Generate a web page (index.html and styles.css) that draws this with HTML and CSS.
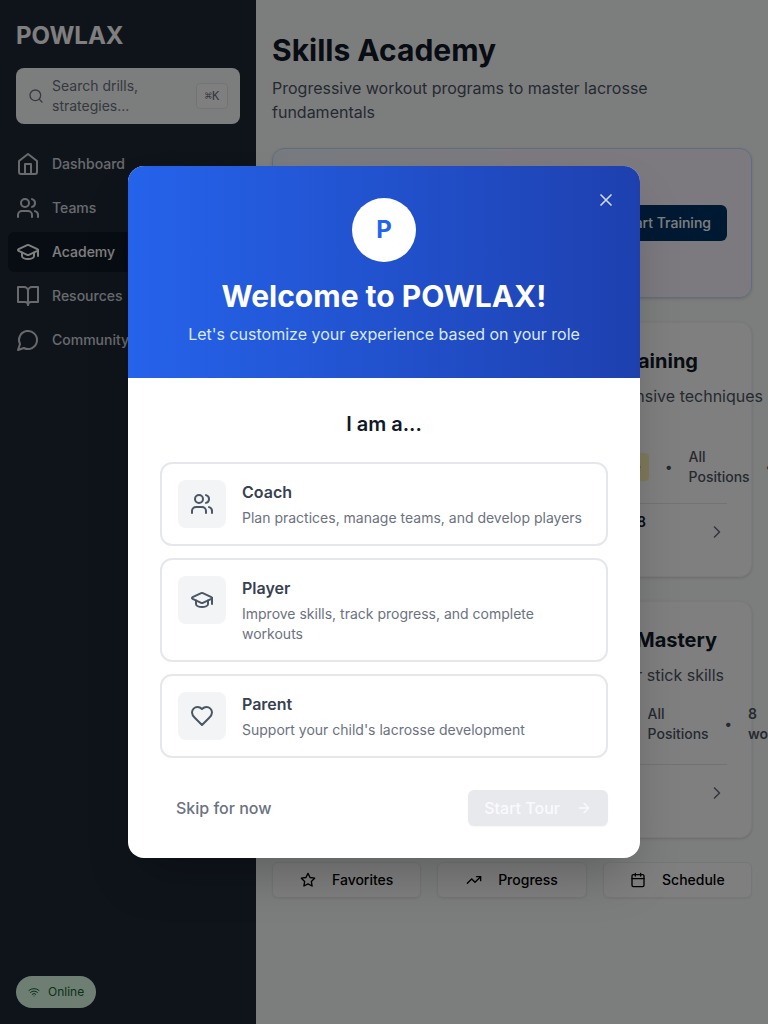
FILE: index.html
```html
<!DOCTYPE html>
<html lang="en">
<head>
<meta charset="utf-8">
<title>POWLAX – Skills Academy</title>
<link rel="stylesheet" href="styles.css">
</head>
<body>
<svg class="sprite" aria-hidden="true">
  <symbol id="users" viewBox="0 0 24 24"><path d="M16 21v-2a4 4 0 0 0-4-4H6a4 4 0 0 0-4 4v2"/><circle cx="9" cy="7" r="4"/><path d="M22 21v-2a4 4 0 0 0-3-3.87M16 3.13a4 4 0 0 1 0 7.75"/></symbol>
  <symbol id="cap" viewBox="0 0 24 24"><path d="M21.42 10.922a1 1 0 0 0-.019-1.838L12.83 5.18a2 2 0 0 0-1.66 0L2.6 9.08a1 1 0 0 0 0 1.832l8.57 3.908a2 2 0 0 0 1.66 0z"/><path d="M22 10v6"/><path d="M6 12.5V16a6 3 0 0 0 12 0v-3.5"/></symbol>
  <symbol id="chevron" viewBox="0 0 24 24"><path d="m9 18 6-6-6-6"/></symbol>
</svg>
<div class="app">
  <aside class="sidebar">
    <div class="brand">POWLAX</div>
    <div class="search">
      <svg class="icon s16" viewBox="0 0 24 24"><circle cx="11" cy="11" r="8"/><path d="m21 21-4.3-4.3"/></svg>
      <span class="search-text">Search drills, strategies...</span>
      <kbd>⌘K</kbd>
    </div>
    <nav class="nav">
      <a class="nav-item"><svg class="icon s24" viewBox="0 0 24 24"><path d="m3 9 9-7 9 7v11a2 2 0 0 1-2 2H5a2 2 0 0 1-2-2z"/><path d="M9 22V12h6v10"/></svg>Dashboard</a>
      <a class="nav-item"><svg class="icon s24"><use href="#users"/></svg>Teams</a>
      <a class="nav-item active"><svg class="icon s24"><use href="#cap"/></svg>Academy</a>
      <a class="nav-item"><svg class="icon s24" viewBox="0 0 24 24"><path d="M2 3h6a4 4 0 0 1 4 4v14a3 3 0 0 0-3-3H2z"/><path d="M22 3h-6a4 4 0 0 0-4 4v14a3 3 0 0 1 3-3h7z"/></svg>Resources</a>
      <a class="nav-item"><svg class="icon s24" viewBox="0 0 24 24"><path d="M7.9 20A9 9 0 1 0 4 16.1L2 22Z"/></svg>Community</a>
    </nav>
    <div class="online"><svg class="icon s12" viewBox="0 0 24 24"><path d="M12 20h.01M2 8.82a15 15 0 0 1 20 0M5 12.859a10 10 0 0 1 14 0M8.5 16.429a5 5 0 0 1 7 0"/></svg>Online</div>
  </aside>
  <main class="main">
    <h1>Skills Academy</h1>
    <p class="lead">Progressive workout programs to master lacrosse fundamentals</p>
    <section class="card hero"><button class="train">Start Training</button></section>
    <section class="card track attack">
      <h2>Attack Training</h2>
      <p class="desc">Offensive techniques</p>
      <div class="meta"><span class="badge">Intermediate</span><span>•</span><span class="positions">All Positions</span><span>•</span></div>
      <div class="foot"><span class="count">8</span><svg class="icon s20"><use href="#chevron"/></svg></div>
    </section>
    <section class="card track wall">
      <h2>Wall Ball Mastery</h2>
      <p class="desc">Master your stick skills</p>
      <div class="meta"><span class="positions">All Positions</span><span>•</span><span class="workouts">8 workouts</span></div>
      <div class="foot"><svg class="icon s20"><use href="#chevron"/></svg></div>
    </section>
    <div class="actions">
      <button><svg class="icon s16" viewBox="0 0 24 24"><path d="M12 2l3.09 6.26L22 9.27l-5 4.87 1.18 6.88L12 17.77l-6.18 3.25L7 14.14 2 9.27l6.91-1.01z"/></svg>Favorites</button>
      <button><svg class="icon s16" viewBox="0 0 24 24"><path d="m22 7-8.5 8.5-5-5L2 17"/><path d="M16 7h6v6"/></svg>Progress</button>
      <button><svg class="icon s16" viewBox="0 0 24 24"><path d="M8 2v4M16 2v4M3 10h18"/><rect x="3" y="4" width="18" height="18" rx="2"/></svg>Schedule</button>
    </div>
  </main>
</div>
<div class="overlay">
  <div class="modal" role="dialog">
    <header class="modal-head">
      <svg class="icon close" viewBox="0 0 24 24"><path d="M18 6 6 18M6 6l12 12"/></svg>
      <div class="logo">P</div>
      <h2>Welcome to POWLAX!</h2>
      <p>Let's customize your experience based on your role</p>
    </header>
    <div class="modal-body">
      <h3>I am a...</h3>
      <div class="roles">
        <div class="role"><span class="tile"><svg class="icon s24"><use href="#users"/></svg></span><div><h4>Coach</h4><p>Plan practices, manage teams, and develop players</p></div></div>
        <div class="role"><span class="tile"><svg class="icon s24"><use href="#cap"/></svg></span><div><h4>Player</h4><p>Improve skills, track progress, and complete workouts</p></div></div>
        <div class="role"><span class="tile"><svg class="icon s24" viewBox="0 0 24 24"><path d="M19 14c1.49-1.46 3-3.21 3-5.5A5.5 5.5 0 0 0 16.5 3c-1.76 0-3 .5-4.5 2-1.5-1.5-2.74-2-4.5-2A5.5 5.5 0 0 0 2 8.5c0 2.3 1.5 4.05 3 5.5l7 7Z"/></svg></span><div><h4>Parent</h4><p>Support your child's lacrosse development</p></div></div>
      </div>
      <footer class="modal-foot">
        <span class="skip">Skip for now</span>
        <button class="tour">Start Tour<svg class="icon s16" viewBox="0 0 24 24"><path d="M5 12h14M12 5l7 7-7 7"/></svg></button>
      </footer>
    </div>
  </div>
</div>
</body>
</html>
```

FILE: styles.css
```css
* { box-sizing: border-box; margin: 0; }
body { position: relative; height: 1024px; overflow: hidden; font: 16px/24px Inter, "Liberation Sans", sans-serif; color: #111827; }
button { font: inherit; border: 0; }
.sprite { display: none; }
.icon { flex: none; fill: none; stroke: currentColor; stroke-width: 2; stroke-linecap: round; stroke-linejoin: round; }
.s12 { width: 12px; height: 12px; }
.s16 { width: 16px; height: 16px; }
.s20 { width: 20px; height: 20px; }
.s24 { width: 24px; height: 24px; }

.app { display: flex; height: 1024px; }
.sidebar { flex: 0 0 256px; display: flex; flex-direction: column; background: #1f2937; }
.brand { padding: 20px 16px 16px; font-size: 24px; line-height: 32px; font-weight: 700; color: #fff; }
.search { display: flex; align-items: center; gap: 8px; height: 56px; margin: 0 16px 20px; padding: 0 12px; border-radius: 8px; background: #f9fafb; color: #6b7280; font-size: 14px; line-height: 20px; }
.search-text { flex: 1; }
kbd { width: 32px; height: 26px; border: 1px solid #e5e7eb; border-radius: 4px; background: #fff; font: 12px/24px "DejaVu Sans Mono", monospace; text-align: center; }
.nav { display: flex; flex-direction: column; gap: 4px; padding: 0 8px; }
.nav-item { display: flex; align-items: center; gap: 12px; height: 40px; padding: 0 8px; border-radius: 6px; font-size: 14px; font-weight: 500; color: #d1d5db; }
.nav-item.active { background: #111827; color: #fff; }
.online { display: flex; align-items: center; gap: 8px; width: 80px; height: 32px; margin: auto 0 16px 16px; padding: 0 12px; border-radius: 16px; background: #dcfce7; color: #166534; font-size: 12px; }

.main { flex: 1; min-width: 0; padding: 32px 16px; overflow: hidden; background: #f9fafb; }
h1 { font-size: 30px; line-height: 36px; font-weight: 700; }
.lead { margin: 8px 0 24px; color: #4b5563; }
.card { width: 480px; margin-bottom: 24px; padding: 24px; border: 1px solid #f3f4f6; border-radius: 12px; background: #fff; box-shadow: 0 1px 3px rgba(0,0,0,.14); }
.hero { display: flex; align-items: center; justify-content: flex-end; height: 150px; border-color: #bfdbfe; background: linear-gradient(90deg, #eff6ff, #faf5ff 60%); }
.train { height: 36px; padding: 0 16px; border-radius: 6px; background: #003366; color: #fff; font-size: 14px; font-weight: 500; }
.track h2 { font-size: 20px; line-height: 28px; font-weight: 700; text-align: right; }
.desc { margin-top: 9px; color: #4b5563; text-align: right; white-space: nowrap; }
.meta { display: flex; align-items: center; gap: 16px; color: #4b5563; font-size: 14px; line-height: 20px; font-weight: 500; }
.badge { padding: 4px 8px; border-radius: 4px; background: #fef3b4; color: #b45309; }
.positions { width: 61px; }
.foot { display: flex; justify-content: flex-end; border-top: 1px solid #e5e7eb; color: #6b7280; }
.attack { height: 255px; }
.attack h2 { padding-right: 29px; }
.attack .desc { margin-right: -36px; }
.attack .meta { justify-content: flex-end; margin: 39px -46px 16px 0; }
.attack .foot { padding-top: 8px; }
.attack .foot .icon { margin-top: 10px; }
.count { margin-right: 61px; color: #111827; font-size: 14px; line-height: 20px; font-weight: 600; }
.wall { height: 237px; }
.wall h2 { padding-right: 10px; }
.wall .desc { padding-right: 3px; }
.wall .meta { justify-content: flex-end; margin: 17px -85px 20px 0; }
.workouts { width: 64px; font-weight: 600; }
.wall .foot { padding-top: 18px; }
.actions { display: grid; grid-template-columns: repeat(3, 1fr); gap: 16px; }
.actions button { display: flex; align-items: center; justify-content: center; gap: 16px; height: 36px; border: 1px solid #e9edf2; border-radius: 6px; background: #fff; color: #000; font-size: 14px; font-weight: 500; padding: 0; box-shadow: 0 1px 2px rgba(0,0,0,.06); }

.overlay { position: absolute; inset: 0; display: flex; align-items: center; justify-content: center; background: rgba(0,0,0,.5); }
.modal { width: 512px; overflow: hidden; border-radius: 16px; background: #fff; box-shadow: 0 25px 50px -12px rgba(0,0,0,.25); }
.modal-head { position: relative; display: flex; flex-direction: column; align-items: center; padding: 32px; background: linear-gradient(90deg, #2563eb, #1e40af); color: #fff; }
.close { position: absolute; top: 24px; right: 24px; width: 20px; height: 20px; opacity: .8; }
.logo { width: 64px; height: 64px; margin-bottom: 16px; border-radius: 50%; background: #fff; color: #2563eb; font-size: 24px; line-height: 64px; font-weight: 700; text-align: center; }
.modal-head h2 { margin-bottom: 8px; font-size: 30px; line-height: 36px; font-weight: 700; }
.modal-head p { color: #dbeafe; }
.modal-body { padding: 32px; }
.modal-body h3 { margin-bottom: 24px; font-size: 20px; line-height: 28px; font-weight: 600; text-align: center; }
.roles { display: flex; flex-direction: column; gap: 12px; }
.role { display: flex; gap: 16px; padding: 16px; border: 2px solid #e5e7eb; border-radius: 12px; }
.tile { flex: none; display: flex; align-items: center; justify-content: center; width: 48px; height: 48px; border-radius: 8px; background: #f3f4f6; color: #4b5563; }
.role h4 { font-size: 16px; line-height: 24px; font-weight: 600; color: #374151; }
.role p { margin-top: 4px; font-size: 14px; line-height: 20px; color: #6b7280; }
.modal-foot { display: flex; align-items: center; justify-content: space-between; margin-top: 32px; }
.skip { padding-left: 16px; color: #6b7280; font-weight: 500; }
.tour { display: flex; align-items: center; gap: 16px; height: 36px; padding: 0 16px; border-radius: 6px; background: #e8e9ed; color: #fafafb; font-weight: 500; box-shadow: 0 1px 2px rgba(0,0,0,.04); }
```
